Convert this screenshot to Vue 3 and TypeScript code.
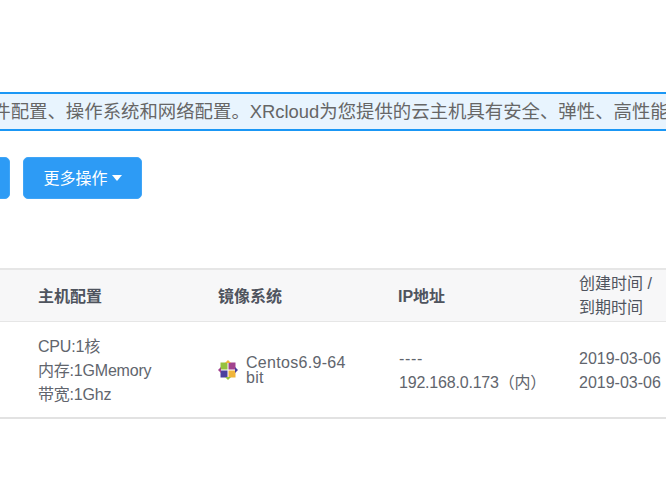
<script setup lang="ts">
interface Column { title: string[]; }
const columns: Column[] = [
  { title: ['主机配置'] },
  { title: ['镜像系统'] },
  { title: ['IP地址'] },
  { title: ['创建时间 /', '到期时间'] },
];
const specs: string[] = ['CPU:1核', '内存:1GMemory', '带宽:1Ghz'];
const dates: string[] = ['2019-03-06', '2019-03-06'];
</script>

<template>
  <div class="page">
    <div class="banner">
      <span class="banner-text">云主机是一种可随时获取的云计算服务，您可以自由选择硬件配置、操作系统和网络配置。XRcloud为您提供的云主机具有安全、弹性、高性能等特点，让您轻松上云。</span>
    </div>
    <div class="actions">
      <button class="btn btn-first">创建云主机</button>
      <button class="btn btn-more">更多操作<span class="caret"></span></button>
    </div>
    <div class="table">
      <div class="row head">
        <div v-for="c in columns" :key="c.title[0]" :class="c.title.length > 1 ? 'cell' : 'cell single'">
          <div v-for="t in c.title" :key="t" :class="c.title.length > 1 ? 'stack' : ''">{{ t }}</div>
        </div>
      </div>
      <div class="row body">
        <div class="cell lines tight">
          <div v-for="s in specs" :key="s">{{ s }}</div>
        </div>
        <div class="cell image">
          <svg class="logo" viewBox="0 0 20 20" width="20" height="20">
            <rect x="2.5" y="2.5" width="7" height="7" fill="#96c13f" />
            <rect x="10.5" y="2.5" width="7" height="7" fill="#a2438f" />
            <rect x="2.5" y="10.5" width="7" height="7" fill="#4a3f9e" />
            <rect x="10.5" y="10.5" width="7" height="7" fill="#f0b53a" />
            <path d="M10 0 L13 3 L7 3 Z" fill="#f0b53a" />
            <path d="M10 20 L13 17 L7 17 Z" fill="#96c13f" />
            <path d="M0 10 L3 7 L3 13 Z" fill="#a2438f" />
            <path d="M20 10 L17 7 L17 13 Z" fill="#4a3f9e" />
          </svg>
          <span class="image-name">Centos6.9-64 bit</span>
        </div>
        <div class="cell lines shift">
          <div class="dashes">----</div>
          <div class="tight">192.168.0.173（内）</div>
        </div>
        <div class="cell lines shift">
          <div v-for="(d, i) in dates" :key="i">{{ d }}</div>
        </div>
      </div>
    </div>
  </div>
</template>

<style>
html, body { margin: 0; background: #fff; overflow: hidden; }
</style>

<style scoped>
.page {
  width: 666px;
  height: 500px;
  overflow: hidden;
  padding-top: 92px;
  box-sizing: border-box;
  font-family: "Liberation Sans", "Noto Sans CJK SC", sans-serif;
}
.banner {
  height: 39px;
  box-sizing: border-box;
  border-top: 2px solid #1a97f5;
  border-bottom: 2px solid #1a97f5;
  background: #e8f4fe;
  color: #666;
  font-size: 18.4px;
  line-height: 35px;
  white-space: nowrap;
  overflow: hidden;
  display: flex;
  justify-content: flex-end;
}
.banner-text {
  flex: none;
  margin-right: -205px;
}
.actions {
  display: flex;
  justify-content: flex-start;
  gap: 13px;
  margin-top: 26px;
  margin-left: -90px;
}
.btn {
  height: 42px;
  border: 1px solid #3fa5f7;
  border-radius: 5px;
  background: #2d9bf5;
  color: #fff;
  font: inherit;
  font-size: 16px;
  padding: 0 0 2px;
}
.btn-first { width: 100px; }
.btn-more {
  width: 119px;
  display: flex;
  align-items: center;
  justify-content: center;
}
.caret {
  width: 0;
  height: 0;
  margin-left: 4px;
  margin-top: 2px;
  border-left: 5.5px solid transparent;
  border-right: 5.5px solid transparent;
  border-top: 6px solid #fff;
}
.table {
  margin-top: 69px;
  padding-left: 38px;
  border-top: 2px solid #e6e6e6;
  border-bottom: 2px solid #e2e2e2;
  color: #51565f;
}
.row {
  display: grid;
  grid-template-columns: repeat(4, 180px);
  margin-left: -38px;
  padding-left: 38px;
  align-items: center;
}
.head {
  height: 51px;
  background: #f7f7f8;
  border-bottom: 1px solid #e6e6e6;
  font-size: 16px;
  font-weight: 700;
  color: #4f545e;
}
.single { padding-bottom: 2px; }
.stack {
  font-size: 16px;
  font-weight: 400;
  line-height: 24px;
  padding-left: 1px;
}
.body {
  height: 95px;
  font-size: 16px;
  color: #61656d;
}
.lines { line-height: 24px; padding-top: 3px; }
.tight { letter-spacing: -0.2px; }
.shift { padding-left: 1px; }
.dashes { letter-spacing: 0.7px; }
.image {
  display: flex;
  align-items: center;
  gap: 8px;
  padding-top: 1px;
}
.logo { flex: none; filter: blur(0.4px); }
.image-name {
  width: 110px;
  font-size: 16px;
  line-height: 15px;
  letter-spacing: 0.3px;
}
</style>
